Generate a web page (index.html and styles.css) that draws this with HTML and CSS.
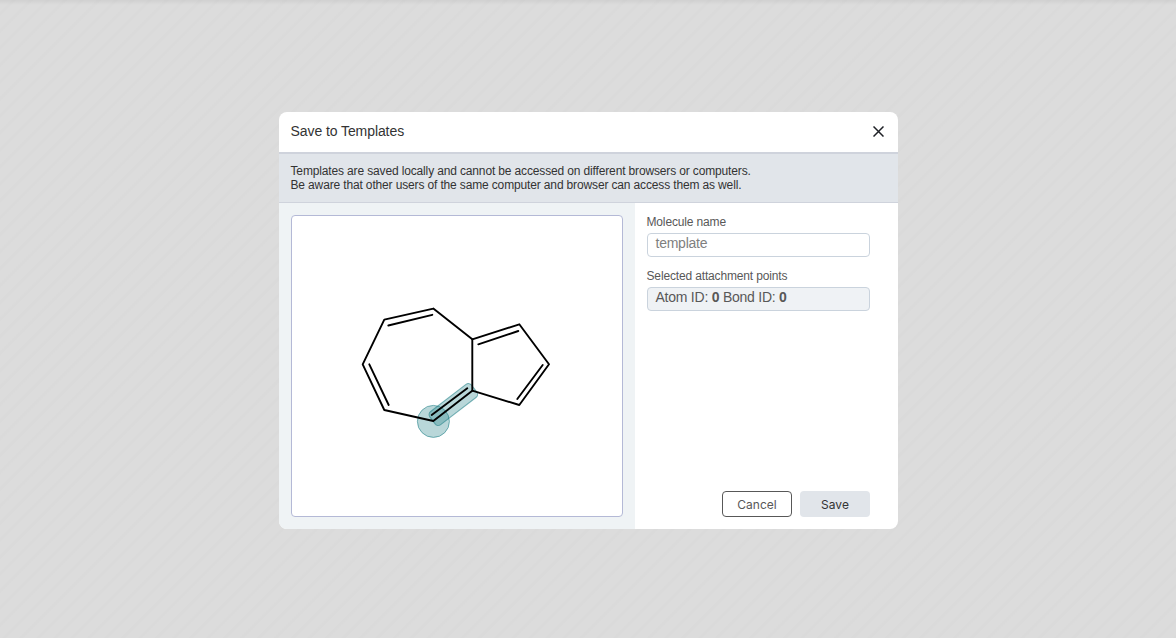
FILE: index.html
```html
<!DOCTYPE html>
<html lang="en">
<head>
<meta charset="utf-8">
<title>Save to Templates</title>
<link rel="stylesheet" href="styles.css">
</head>
<body>
<div class="overlay">
  <div class="dialog">
    <header class="dialog-header">
      <span class="dialog-title">Save to Templates</span>
      <button class="close" aria-label="Close">
        <svg width="11" height="11" viewBox="0 0 11 11"><path d="M0.5 0.5L10.5 10.5M10.5 0.5L0.5 10.5" stroke="#1f2126" stroke-width="1.5" fill="none"/></svg>
      </button>
    </header>
    <div class="info">Templates are saved locally and cannot be accessed on different browsers or computers.<br>Be aware that other users of the same computer and browser can access them as well.</div>
    <div class="body">
      <div class="left">
        <div class="preview">
          <svg class="molecule" viewBox="292 216 330 300">
            <g class="hl">
              <circle cx="433.4" cy="421.4" r="16"/>
              <rect x="0" y="-8.25" width="52.5" height="16.5" rx="4" transform="translate(432.5 420.5) rotate(-37.5)"/>
            </g>
            <g class="bonds">
              <path d="M433.3 308.6L384.3 319.6L362.7 364.3L384.3 410L433.3 421L472.3 390.7L472.3 339.3L433.3 308.6"/>
              <path d="M472.3 339.3L519.3 324.3L549 364.3L519.3 405L472.3 390.7"/>
              <path d="M388.3 325.5L432.3 314.8"/>
              <path d="M369.3 364.3L388.7 405"/>
              <path d="M431.7 415L467.3 388.3"/>
              <path d="M478.3 344.3L518.3 331"/>
              <path d="M542.7 365L517.3 399"/>
            </g>
          </svg>
        </div>
      </div>
      <div class="right">
        <label class="field-label">Molecule name</label>
        <div class="input placeholder">template</div>
        <label class="field-label second">Selected attachment points</label>
        <div class="input readonly">Atom ID: <b>0</b> Bond ID: <b>0</b></div>
        <div class="actions">
          <button class="btn btn-cancel">Cancel</button>
          <button class="btn btn-save">Save</button>
        </div>
      </div>
    </div>
  </div>
</div>
</body>
</html>
```
FILE: styles.css
```css
* { box-sizing: border-box; }
html, body { margin: 0; height: 100%; }
body {
  font-family: "Liberation Sans", Arial, sans-serif;
  overflow: hidden;
}
.overlay {
  width: 1176px;
  height: 638px;
  padding: 112px 0 0 279px;
  background-color: #dbdbdb;
  background-image:
    linear-gradient(to bottom, rgba(0,0,0,.05), rgba(0,0,0,0) 5px),
    repeating-linear-gradient(135deg, #dcdcdc 0, #dcdcdc 8px, #dadada 9px, #dadada 11px, #dcdcdc 12px);
}
.dialog {
  width: 619px;
  height: 417px;
  background: #fff;
  border-radius: 8px;
  overflow: hidden;
  display: flex;
  flex-direction: column;
}
.dialog-header {
  height: 40px;
  flex: none;
  display: flex;
  align-items: center;
  justify-content: space-between;
  padding: 0 14.5px 2px 11.5px;
}
.dialog-title { font-size: 14px; letter-spacing: -.08px; color: #333; }
.close {
  display: flex;
  padding: 0;
  border: 0;
  background: none;
}
.info {
  height: 51px;
  flex: none;
  padding: 10px 12px 0 11.5px;
  background: #e1e5ea;
  border-top: 2px solid #cfd3dc;
  border-bottom: 1px solid #cfd3dc;
  font-size: 12px;
  letter-spacing: -.145px;
  line-height: 14px;
  color: #333;
}
.body { flex: 1; display: flex; min-height: 0; }
.left {
  width: 356px;
  flex: none;
  padding: 12px;
  background: #eff3f5;
}
.preview {
  width: 332px;
  height: 302px;
  background: #fff;
  border: 1px solid #b4b9d6;
  border-radius: 4px;
}
.molecule { display: block; width: 330px; height: 300px; }
.bonds path {
  fill: none;
  stroke: #000;
  stroke-width: 1.9;
  stroke-linejoin: round;
  stroke-linecap: round;
}
.hl circle, .hl rect {
  fill: rgba(22,122,130,.3);
  stroke: rgba(22,122,130,.55);
  stroke-width: 1;
}
.right {
  flex: 1;
  display: flex;
  flex-direction: column;
  padding: 12px 28px 12px 11.5px;
}
.field-label { font-size: 12px; letter-spacing: -.15px; line-height: 14px; color: #585858; }
.field-label.second { margin-top: 12px; }
.input {
  width: 223px;
  height: 24px;
  margin-top: 4px;
  margin-left: .5px;
  padding: 0 7.5px;
  border: 1px solid #cad3dd;
  border-radius: 4px;
  font-size: 14px;
  letter-spacing: -.24px;
  line-height: 19px;
}
.placeholder { color: #7f7f7f; }
.readonly { background: #eff2f5; color: #585858; }
.actions {
  margin-top: auto;
  margin-left: .5px;
  display: flex;
  justify-content: flex-end;
  gap: 8px;
  width: 223px;
}
.btn {
  width: 70px;
  height: 26px;
  padding: 0;
  border-radius: 4px;
  font-family: Inter, sans-serif;
  font-size: 12px;
}
.btn-cancel { background: #fff; border: 1px solid #585858; color: #585858; }
.btn-save { background: #e1e5ea; border: 0; color: #333; }
```
